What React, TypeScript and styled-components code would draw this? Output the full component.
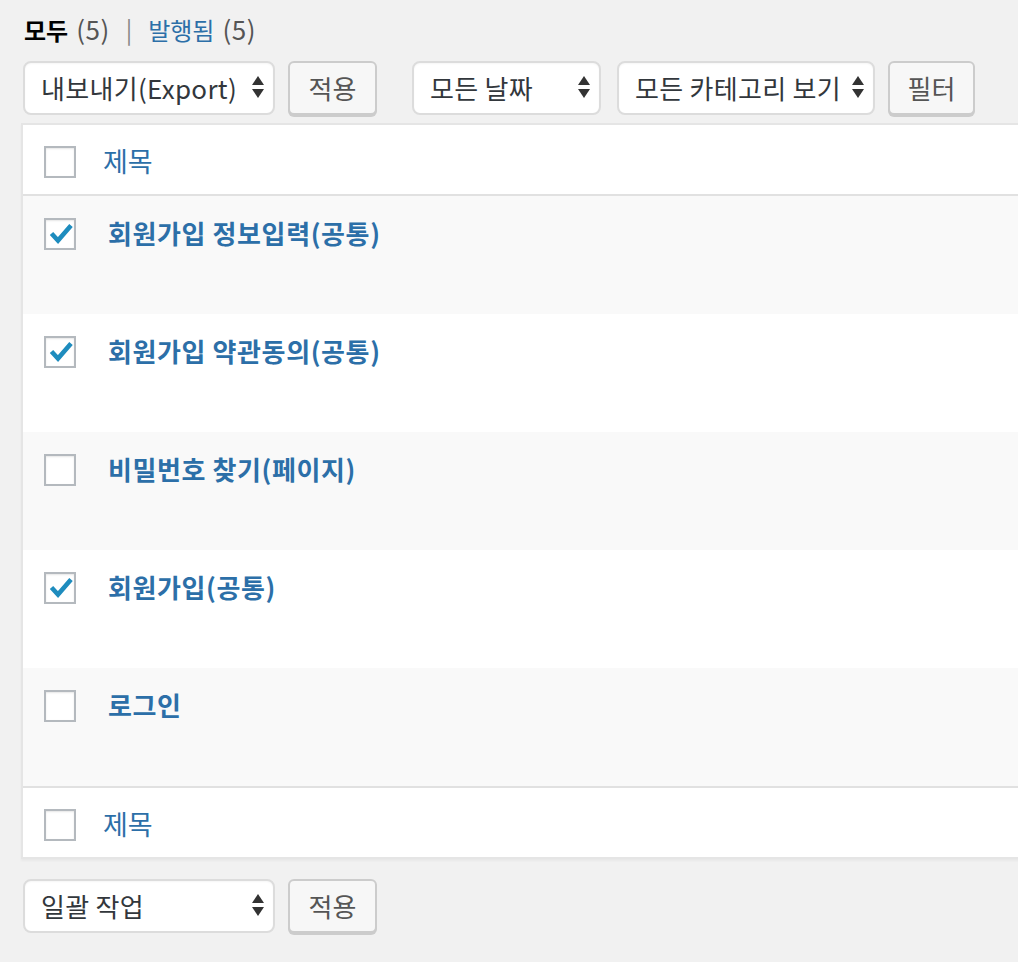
import * as React from 'react';
import styled, { createGlobalStyle } from 'styled-components';

const colors = {
    page: '#f1f1f1',
    text: '#32373c',
    link: '#2c6fa8',
    muted: '#555',
    border: '#e1e1e1',
    field: '#dcdcdc',
    check: '#1e8cbe',
};

const GlobalStyle = createGlobalStyle`
    html, body {
        margin: 0;
        padding: 0;
        background: ${colors.page};
        overflow: hidden;
    }
    body {
        font-family: "Noto Sans CJK KR", "Noto Sans", sans-serif;
        color: ${colors.text};
    }
`;

const Page = styled.div`
    width: 1100px;
    padding: 13px 0 0 21px;
`;

const Views = styled.ul`
    display: flex;
    align-items: center;
    gap: 14px;
    list-style: none;
    margin: 0 0 0 3px;
    padding: 0;
    height: 32px;
    font-size: 24px;
    line-height: 32px;
`;

const ViewItem = styled.li<{ current?: boolean }>`
    color: ${props => (props.current ? '#000' : colors.link)};
    font-weight: ${props => (props.current ? 700 : 400)};
    white-space: nowrap;
`;

const Count = styled.span`
    margin-left: 8px;
    font-size: 26px;
    letter-spacing: 0.5px;
    color: ${colors.muted};
    font-weight: 400;
`;

const Sep = styled.li`
    color: #888;
    margin: 0 2px;
`;

const TableNav = styled.div<{ top?: boolean }>`
    display: flex;
    align-items: flex-start;
    height: 56px;
    margin: ${props => (props.top ? '16px 0 6px 2px' : '20px 0 0 2px')};
`;

const Group = styled.div`
    display: flex;
    align-items: flex-start;
    gap: 13px;
    & + & {
        margin-left: 35px;
    }
`;

const SelectBox = styled.div<{ w: number; spaced?: boolean }>`
    box-sizing: border-box;
    width: ${props => props.w}px;
    height: 54px;
    margin-left: ${props => (props.spaced ? 3 : 0)}px;
    display: flex;
    align-items: center;
    justify-content: space-between;
    padding: 0 8px 2px 16px;
    background: #fff;
    border: 2px solid ${colors.field};
    border-radius: 8px;
    box-shadow: inset 0 1px 2px rgba(0, 0, 0, 0.04);
    font-size: 26px;
    letter-spacing: 0.3px;
    color: ${colors.text};
    white-space: nowrap;
    overflow: hidden;
`;

const Arrows = styled.svg`
    flex: none;
    width: 14px;
    height: 24px;
`;

const Button = styled.button<{ w: number }>`
    box-sizing: border-box;
    width: ${props => props.w}px;
    height: 54px;
    padding: 0 0 2px;
    background: #f7f7f7;
    border: 2px solid #ccc;
    border-radius: 6px;
    box-shadow: 0 2px 0 #ccc;
    font-family: inherit;
    font-size: 26px;
    color: #555;
`;

const Table = styled.div`
    background: #fff;
    border: 2px solid #e5e5e5;
    box-shadow: 0 2px 2px rgba(0, 0, 0, 0.04);
`;

const HeadRow = styled.div<{ foot?: boolean }>`
    display: flex;
    align-items: flex-start;
    box-sizing: border-box;
    height: 71px;
    padding: 21px 0 0 21px;
    border-top: ${props => (props.foot ? `2px solid ${colors.border}` : 'none')};
    border-bottom: ${props => (props.foot ? 'none' : `2px solid ${colors.border}`)};
`;

const HeadLabel = styled.span`
    margin-left: 27px;
    font-size: 27px;
    line-height: 30px;
    color: ${colors.link};
`;

const Row = styled.div<{ alt: boolean }>`
    display: flex;
    align-items: flex-start;
    box-sizing: border-box;
    height: 118px;
    padding: 22px 0 0 21px;
    background: ${props => (props.alt ? '#f9f9f9' : '#fff')};
`;

const RowTitle = styled.a`
    margin-left: 32px;
    font-size: 26px;
    font-weight: 700;
    letter-spacing: 0.6px;
    line-height: 30px;
    color: ${colors.link};
    text-decoration: none;
    white-space: nowrap;
`;

const Box = styled.span`
    flex: none;
    box-sizing: border-box;
    width: 32px;
    height: 32px;
    position: relative;
    background: #fff;
    border: 2px solid #b4b9be;
    box-shadow: inset 0 1px 2px rgba(0, 0, 0, 0.1);
`;

const Check = styled.svg`
    position: absolute;
    left: -2px;
    top: -2px;
    width: 32px;
    height: 32px;
`;

const Checkbox: React.FC<{ checked?: boolean }> = ({ checked }) => (
    <Box>
        {checked && (
            <Check viewBox="0 0 32 32">
                <path
                    fill="none"
                    stroke={colors.check}
                    strokeWidth={4.6}
                    strokeLinejoin="miter"
                    d="M7.5 15.5 L14 22.5 L27 7.5"
                />
            </Check>
        )}
    </Box>
);

const Select: React.FC<{ w: number; label: string; spaced?: boolean }> = ({
    w,
    label,
    spaced,
}) => (
    <SelectBox w={w} spaced={spaced}>
        <span>{label}</span>
        <Arrows viewBox="0 0 14 24">
            <path fill="#333" d="M7 1 L13 10 L1 10 Z" />
            <path fill="#333" d="M1 14 L13 14 L7 23 Z" />
        </Arrows>
    </SelectBox>
);

const rows = [
    { title: '회원가입 정보입력(공통)', checked: true },
    { title: '회원가입 약관동의(공통)', checked: true },
    { title: '비밀번호 찾기(페이지)', checked: false },
    { title: '회원가입(공통)', checked: true },
    { title: '로그인', checked: false },
];

const App: React.FC = () => {
    return (
        <>
            <GlobalStyle />
            <Page>
                <Views>
                    <ViewItem current>
                        모두<Count>(5)</Count>
                    </ViewItem>
                    <Sep>|</Sep>
                    <ViewItem>
                        발행됨<Count>(5)</Count>
                    </ViewItem>
                </Views>

                <TableNav top>
                    <Group>
                        <Select w={252} label="내보내기(Export)" />
                        <Button w={89}>적용</Button>
                    </Group>
                    <Group>
                        <Select w={189} label="모든 날짜" />
                        <Select w={258} label="모든 카테고리 보기" spaced />
                        <Button w={87}>필터</Button>
                    </Group>
                </TableNav>

                <Table>
                    <HeadRow>
                        <Checkbox />
                        <HeadLabel>제목</HeadLabel>
                    </HeadRow>
                    {rows.map((row, i) => (
                        <Row key={row.title} alt={i % 2 === 0}>
                            <Checkbox checked={row.checked} />
                            <RowTitle>{row.title}</RowTitle>
                        </Row>
                    ))}
                    <HeadRow foot>
                        <Checkbox />
                        <HeadLabel>제목</HeadLabel>
                    </HeadRow>
                </Table>

                <TableNav>
                    <Group>
                        <Select w={252} label="일괄 작업" />
                        <Button w={89}>적용</Button>
                    </Group>
                </TableNav>
            </Page>
        </>
    );
};

export default App;
